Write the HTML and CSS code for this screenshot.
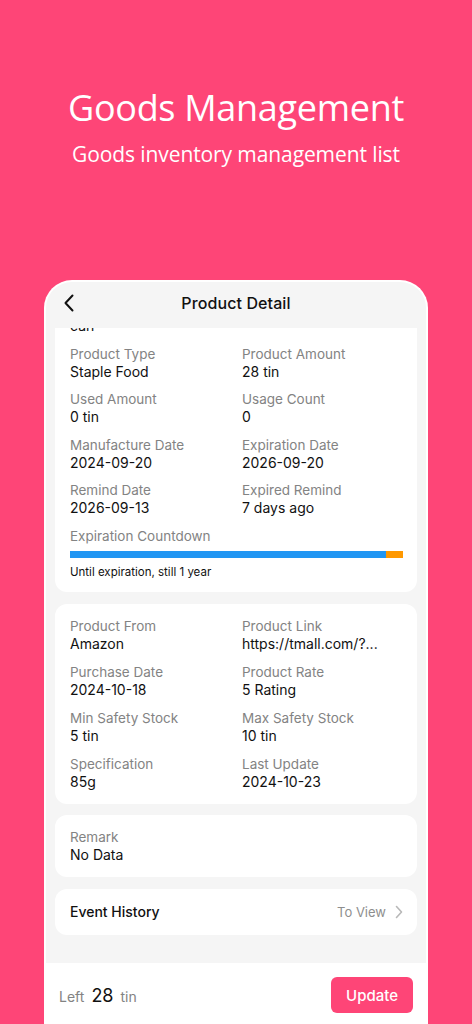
FILE: index.html
```html
<!DOCTYPE html>
<html lang="en">

<head>
    <meta charset="UTF-8">
    <meta name="viewport" content="width=device-width, initial-scale=1.0">
    <title>Goods Management</title>
    <link rel="stylesheet" href="styles.css">
</head>

<body>
    <header class="hero">
        <h1 class="hero-title">Goods Management</h1>
        <p class="hero-sub">Goods inventory management list</p>
    </header>

    <div class="phone">
        <div class="nav">
            <svg class="nav-back" viewBox="0 0 12 18" width="12" height="18">
                <path d="M9.5 1.5L2.5 9l7 7.5" fill="none" stroke="#111" stroke-width="2" stroke-linecap="round" stroke-linejoin="round" />
            </svg>
            <span class="nav-title">Product Detail</span>
        </div>

        <div class="scroll">
            <!-- first card is scrolled up under the nav bar -->
            <section class="card card-top">
                <div class="grid">
                    <div class="cell">
                        <div class="label">Product Unit</div>
                        <div class="value">can</div>
                    </div>
                    <div class="cell"></div>
                    <div class="cell">
                        <div class="label">Product Type</div>
                        <div class="value">Staple Food</div>
                    </div>
                    <div class="cell">
                        <div class="label">Product Amount</div>
                        <div class="value">28 tin</div>
                    </div>
                    <div class="cell">
                        <div class="label">Used Amount</div>
                        <div class="value">0 tin</div>
                    </div>
                    <div class="cell">
                        <div class="label">Usage Count</div>
                        <div class="value">0</div>
                    </div>
                    <div class="cell">
                        <div class="label">Manufacture Date</div>
                        <div class="value">2024-09-20</div>
                    </div>
                    <div class="cell">
                        <div class="label">Expiration Date</div>
                        <div class="value">2026-09-20</div>
                    </div>
                    <div class="cell">
                        <div class="label">Remind Date</div>
                        <div class="value">2026-09-13</div>
                    </div>
                    <div class="cell">
                        <div class="label">Expired Remind</div>
                        <div class="value">7 days ago</div>
                    </div>
                </div>
                <div class="countdown">
                    <div class="label">Expiration Countdown</div>
                    <div class="bar">
                        <div class="bar-fill" style="width: 94.9%"></div>
                    </div>
                    <div class="countdown-note">Until expiration, still 1 year</div>
                </div>
            </section>

            <section class="card">
                <div class="grid">
                    <div class="cell">
                        <div class="label">Product From</div>
                        <div class="value">Amazon</div>
                    </div>
                    <div class="cell">
                        <div class="label">Product Link</div>
                        <div class="value">https://tmall.com/?...</div>
                    </div>
                    <div class="cell">
                        <div class="label">Purchase Date</div>
                        <div class="value">2024-10-18</div>
                    </div>
                    <div class="cell">
                        <div class="label">Product Rate</div>
                        <div class="value">5 Rating</div>
                    </div>
                    <div class="cell">
                        <div class="label">Min Safety Stock</div>
                        <div class="value">5 tin</div>
                    </div>
                    <div class="cell">
                        <div class="label">Max Safety Stock</div>
                        <div class="value">10 tin</div>
                    </div>
                    <div class="cell">
                        <div class="label">Specification</div>
                        <div class="value">85g</div>
                    </div>
                    <div class="cell">
                        <div class="label">Last Update</div>
                        <div class="value">2024-10-23</div>
                    </div>
                </div>
            </section>

            <section class="card">
                <div class="label">Remark</div>
                <div class="value">No Data</div>
            </section>

            <section class="card card-link">
                <span class="link-title">Event History</span>
                <span class="link-more">
                    To View
                    <svg viewBox="0 0 8 14" width="8" height="14">
                        <path d="M1.5 1.5L6.5 7l-5 5.5" fill="none" stroke="#b8b8b8" stroke-width="1.6" stroke-linecap="round" stroke-linejoin="round" />
                    </svg>
                </span>
            </section>
        </div>

        <footer class="footbar">
            <div class="left">
                <span class="left-unit">Left</span>
                <span class="left-num">28</span>
                <span class="left-unit">tin</span>
            </div>
            <button class="btn-update">Update</button>
        </footer>
    </div>
</body>

</html>
```

FILE: styles.css
```css
:root {
  --pink: #fe4577;
  --page: #f5f5f5;
  --text: #111111;
  --muted: #838383;
}
html,
body {
  margin: 0;
  padding: 0;
}
body {
  width: 472px;
  height: 1024px;
  overflow: hidden;
  background-color: var(--pink);
  font-family: Inter, "Noto Sans", sans-serif;
  color: var(--text);
}
.hero {
  padding-top: 84px;
  text-align: center;
  color: #fff;
  font-family: "Open Sans", "Noto Sans", sans-serif;
}
.hero-title {
  margin: 0;
  font-size: 36px;
  font-weight: 400;
  line-height: 48px;
  letter-spacing: -0.3px;
}
.hero-sub {
  margin: 7px 0 0;
  font-size: 21px;
  line-height: 30px;
  letter-spacing: -0.1px;
}
.phone {
  width: 384px;
  height: 760px;
  margin: 111px auto 0;
  box-sizing: border-box;
  border: 2px solid #fff;
  border-bottom: none;
  border-radius: 28px 28px 0 0;
  background-color: var(--page);
  overflow: hidden;
  display: flex;
  flex-direction: column;
}
.nav {
  height: 46px;
  flex: none;
  display: flex;
  align-items: center;
  justify-content: center;
  position: relative;
  padding-bottom: 4px;
  box-sizing: border-box;
}
.nav-back {
  position: absolute;
  left: 17px;
  top: 12px;
}
.nav-title {
  font-size: 16px;
  font-weight: 500;
  letter-spacing: 0.1px;
}
.scroll {
  height: 635px;
  flex: none;
  overflow: hidden;
  padding: 0 9px;
  display: flex;
  flex-direction: column;
  row-gap: 11.5px;
}
.card {
  flex: none;
  background-color: #fff;
  border-radius: 12px;
  padding: 13px 14px 13px 15px;
}
.card-top {
  margin-top: -42px;
  border-radius: 0 0 12px 12px;
  padding-bottom: 12px;
}
.grid {
  display: grid;
  grid-template-columns: 172px 1fr;
  row-gap: 10px;
}
.card-top .grid {
  row-gap: 9.5px;
}
.label {
  font-size: 13.5px;
  line-height: 18px;
  color: var(--muted);
}
.value {
  font-size: 14px;
  line-height: 18px;
  color: var(--text);
}
.countdown {
  margin-top: 10px;
}
.bar {
  margin-top: 6px;
  height: 7px;
  background-color: #ff9800;
  display: flex;
}
.bar-fill {
  height: 100%;
  background-color: #2196f3;
}
.countdown-note {
  margin-top: 6px;
  font-size: 11.5px;
  line-height: 16px;
}
.card-link {
  height: 46px;
  box-sizing: border-box;
  padding-top: 0;
  padding-bottom: 0;
  display: flex;
  align-items: center;
  justify-content: space-between;
}
.link-title {
  font-size: 14px;
  font-weight: 500;
}
.link-more {
  display: flex;
  align-items: center;
  column-gap: 9px;
  font-size: 13px;
  color: #8e8e8e;
}
.footbar {
  flex: 1;
  background-color: #fff;
  display: flex;
  align-items: flex-start;
  justify-content: space-between;
  padding: 14px 13px 0;
}
.left {
  height: 36px;
  display: flex;
  align-items: center;
  column-gap: 7px;
}
.left-unit {
  font-size: 14px;
  color: var(--muted);
  padding-top: 2px;
}
.left-num {
  font-size: 18px;
  color: var(--text);
}
.btn-update {
  width: 82px;
  height: 36px;
  border: none;
  border-radius: 6px;
  background-color: var(--pink);
  color: #fff;
  font-family: Inter, "Noto Sans", sans-serif;
  font-size: 15px;
  font-weight: 500;
}
```
